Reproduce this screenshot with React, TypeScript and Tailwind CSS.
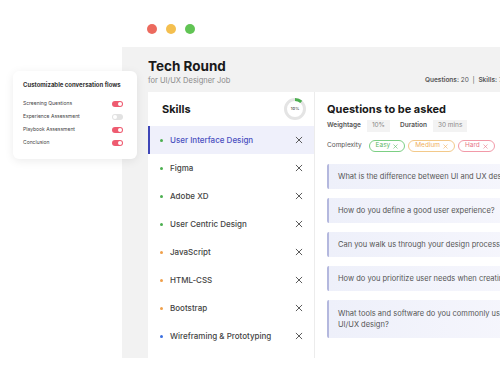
import React from "react";

const skills = [
  { name: "User Interface Design", dot: "bg-[#4caf50]", active: true },
  { name: "Figma", dot: "bg-[#4caf50]" },
  { name: "Adobe XD", dot: "bg-[#4caf50]" },
  { name: "User Centric Design", dot: "bg-[#4caf50]" },
  { name: "JavaScript", dot: "bg-[#f0a04b]" },
  { name: "HTML-CSS", dot: "bg-[#f0a04b]" },
  { name: "Bootstrap", dot: "bg-[#f0a04b]" },
  { name: "Wireframing & Prototyping", dot: "bg-[#3b6fe0]" },
];

const questions = [
  "What is the difference between UI and UX design?",
  "How do you define a good user experience?",
  "Can you walk us through your design process?",
  "How do you prioritize user needs when creating a design?",
];

const flows = [
  { label: "Screening Questions", on: true },
  { label: "Experience Assessment", on: false },
  { label: "Playbook Assessment", on: true },
  { label: "Conclusion", on: true },
];

const Cross = ({ className }: { className?: string }) => (
  <svg viewBox="0 0 10 10" className={className} fill="none" stroke="currentColor" strokeWidth="1.2" strokeLinecap="round">
    <path d="M1.5 1.5l7 7M8.5 1.5l-7 7" />
  </svg>
);

const Ring = () => (
  <div className="relative w-[22px] h-[22px]">
    <svg viewBox="0 0 22 22" className="w-[22px] h-[22px]">
      <circle cx="11" cy="11" r="9.5" fill="none" stroke="#e4e4e4" strokeWidth="3" />
      <path d="M11 1.5 A9.5 9.5 0 0 1 17.3 3.9" fill="none" stroke="#4caf50" strokeWidth="3" />
    </svg>
    <span className="absolute inset-0 flex items-center justify-center text-[4px] font-semibold text-[#555]">10%</span>
  </div>
);

const Pill = ({ label, cls }: { label: string; cls: string }) => (
  <span className={`flex items-center gap-[3px] h-[12px] px-[6px] rounded-full border text-[6.5px] ${cls}`}>
    {label}
    <Cross className="w-[5px] h-[5px]" />
  </span>
);

const qCard =
  "flex items-center pl-[9px] bg-gradient-to-r from-[#eef0fa] to-[#f7f7fd] border-l-2 border-[#b4b8de] rounded-[2px] text-[7.5px] text-[#555]";

export default function App() {
  return (
    <div className="relative w-[500px] h-[375px] overflow-hidden bg-white font-['Inter',sans-serif] text-[#222]">
      {/* window dots */}
      <div className="flex gap-[9px] pl-[147px] pt-[24px] h-[47px]">
        <span className="w-[10px] h-[10px] rounded-full bg-[#ec6a5e]" />
        <span className="w-[10px] h-[10px] rounded-full bg-[#f4bf4f]" />
        <span className="w-[10px] h-[10px] rounded-full bg-[#61c454]" />
      </div>

      <div className="ml-[122px] w-[420px] h-[311px] bg-[#f2f2f2] pl-[26px] pt-[10px] flex flex-col">
        <div className="flex items-end h-[29px] mb-[6px] shrink-0">
          <div className="w-[277px] shrink-0">
            <div className="text-[13.5px] font-bold leading-[18px] text-[#1a1a1a]">Tech Round</div>
            <div className="text-[7.5px] leading-[11px] text-[#8a8a8a]">for UI/UX Designer Job</div>
          </div>
          <div className="text-[6.5px] leading-[11px] text-[#555] whitespace-nowrap">
            <b className="font-semibold">Questions:</b> 20&nbsp;&nbsp;|&nbsp;&nbsp;<b className="font-semibold">Skills:</b> 7
          </div>
        </div>

        <div className="flex-1 flex bg-white">
          {/* skills column */}
          <div className="w-[167px] shrink-0 border-r border-[#ececec]">
            <div className="h-[34px] flex items-center justify-between pl-[14px] pr-[8px]">
              <span className="text-[11px] font-bold text-[#1a1a1a]">Skills</span>
              <Ring />
            </div>
            {skills.map((s) => (
              <div
                key={s.name}
                className={`h-[28px] flex items-center pl-[10px] pr-[11px] border-l-2 ${
                  s.active ? "bg-[#eff0fb] border-[#3f46b8]" : "border-transparent"
                }`}
              >
                <span className={`w-[3px] h-[3px] rounded-full ${s.dot}`} />
                <span className={`ml-[7px] flex-1 text-[8px] font-medium whitespace-nowrap ${s.active ? "text-[#4a4fc0]" : "text-[#444]"}`}>
                  {s.name}
                </span>
                <Cross className="w-[8px] h-[8px] text-[#555]" />
              </div>
            ))}
          </div>

          {/* questions column */}
          <div className="flex-1 pl-[12px] flex flex-col">
            <div className="h-[34px] flex items-center">
              <span className="text-[11px] font-bold text-[#1a1a1a] whitespace-nowrap">Questions to be asked</span>
            </div>
            <div className="flex items-center h-[12px] gap-[6px] text-[6.5px] -mt-[6px]">
              <span className="font-semibold text-[#555]">Weightage</span>
              <span className="bg-[#f3f3f3] px-[5px] h-[12px] flex items-center text-[#888]">10%</span>
              <span className="ml-[4px] font-semibold text-[#555]">Duration</span>
              <span className="bg-[#f3f3f3] px-[5px] h-[12px] flex items-center text-[#888]">30 mins</span>
            </div>
            <div className="flex items-center mt-[8px] gap-[3px] text-[6.5px]">
              <span className="text-[#555] mr-[4px]">Complexity</span>
              <Pill label="Easy" cls="border-[#7ccf84] text-[#5cb866]" />
              <Pill label="Medium" cls="border-[#f3c98a] text-[#f0b060]" />
              <Pill label="Hard" cls="border-[#f29aa8] text-[#e87587]" />
            </div>
            <div className="mt-[12px] flex flex-col gap-[9px]">
              {questions.map((q) => (
                <div key={q} className={`${qCard} h-[25px] whitespace-nowrap`}>
                  {q}
                </div>
              ))}
              <div className={`${qCard} h-[38px] leading-[11px] pr-[8px]`}>
                What tools and software do you commonly use for UI/UX design?
              </div>
            </div>
          </div>
        </div>
      </div>

      {/* floating flows card */}
      <div className="absolute left-[13px] top-[71px] w-[124px] h-[88px] bg-white rounded-[6px] shadow-[0_2px_10px_rgba(0,0,0,0.08)] pl-[10px] pr-[14px] pt-[9px]">
        <div className="text-[6px] font-bold text-[#333] whitespace-nowrap">Customizable conversation flows</div>
        <div className="mt-[11px] flex flex-col gap-[5.5px]">
          {flows.map((f) => (
            <div key={f.label} className="flex items-center justify-between h-[7.5px]">
              <span className="text-[5px] text-[#444] whitespace-nowrap">{f.label}</span>
              <span className={`w-[11px] h-[6px] rounded-full flex items-center px-[1px] ${f.on ? "bg-[#ee5b70] justify-end" : "bg-[#e2e2e2] justify-start"}`}>
                <span className="w-[4px] h-[4px] rounded-full bg-white" />
              </span>
            </div>
          ))}
        </div>
      </div>
    </div>
  );
}
